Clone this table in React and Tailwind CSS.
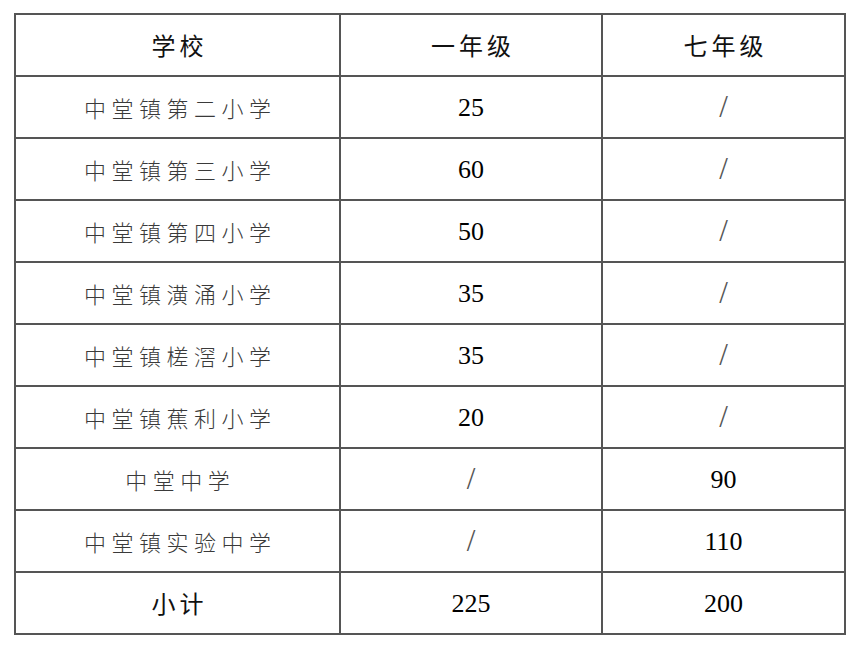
const rows = [
  ['中堂镇第二小学', '25', '/'],
  ['中堂镇第三小学', '60', '/'],
  ['中堂镇第四小学', '50', '/'],
  ['中堂镇潢涌小学', '35', '/'],
  ['中堂镇槎滘小学', '35', '/'],
  ['中堂镇蕉利小学', '20', '/'],
  ['中堂中学', '/', '90'],
  ['中堂镇实验中学', '/', '110'],
];

const Cell = ({ value, first }) => {
  if (value === '/') {
    return (
      <td className="border-2 border-[#555] text-center">
        <span className="font-['Liberation_Serif',serif] text-[31px] text-[#555]">/</span>
      </td>
    );
  }
  if (first) {
    return (
      <td className="border-2 border-[#555] text-center">
        <span className="font-['Noto_Sans_CJK_SC',sans-serif] font-light text-[22px] tracking-[5.5px] pl-[5.5px] text-[#3a3a3a]">{value}</span>
      </td>
    );
  }
  return (
    <td className="border-2 border-[#555] text-center font-['Liberation_Serif',serif] text-[26px] text-black">{value}</td>
  );
};

const App = () => {
  return (
    <div className="bg-white w-[864px] h-[648px] pl-[14px] pt-[13px]">
      <table className="border-collapse w-[832px] table-fixed">
        <colgroup>
          <col className="w-[325px]" />
          <col className="w-[262px]" />
          <col />
        </colgroup>
        <thead>
          <tr className="h-[62px]">
            {['学校', '一年级', '七年级'].map((h) => (
              <th key={h} className="border-2 border-[#555] text-center font-normal">
                <span className="font-['Noto_Sans_CJK_SC',sans-serif] text-[24px] tracking-[4px] pl-[4px] text-[#111]">{h}</span>
              </th>
            ))}
          </tr>
        </thead>
        <tbody>
          {rows.map((r) => (
            <tr key={r[0]} className="h-[62px]">
              <Cell value={r[0]} first />
              <Cell value={r[1]} />
              <Cell value={r[2]} />
            </tr>
          ))}
          <tr className="h-[62px]">
            <td className="border-2 border-[#555] text-center">
              <span className="font-['Noto_Sans_CJK_SC',sans-serif] text-[24px] tracking-[4px] pl-[4px] text-[#111]">小计</span>
            </td>
            <Cell value="225" />
            <Cell value="200" />
          </tr>
        </tbody>
      </table>
    </div>
  );
};

export default App;
